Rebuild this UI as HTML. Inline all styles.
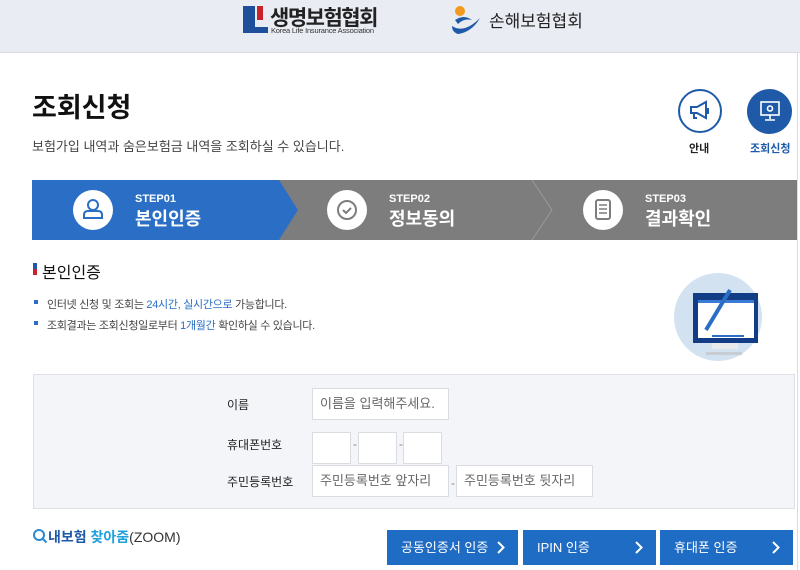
<!DOCTYPE html>
<html><head><meta charset="utf-8"><style>
*{margin:0;padding:0;box-sizing:border-box}
body{width:800px;height:570px;overflow:hidden;background:#fff;font-family:"Liberation Sans","Noto Sans CJK KR",sans-serif;color:#222;position:relative}
.abs{position:absolute}
.hdr{left:0;top:0;width:800px;height:53px;background:#e9edf3;border-bottom:1px solid #d8dde4}
.page{left:0;top:53px;width:798px;height:517px;border-right:1px solid #d8dde4}
.in{background:#fff;border:1px solid #d9dde2;font-size:13px;color:#666;padding-left:7px;line-height:30px;height:32px}
.btn{top:530px;height:35px;background:#1f6cc4;color:#fff;font-size:13px;line-height:35px;padding-left:14px}
.btn svg{position:absolute;right:13px;top:11px}
</style></head><body>
<div class="abs hdr"></div>
<div class="abs" style="left:243px;top:6px;width:12px;height:27px;background:#1e4f9a"></div>
<div class="abs" style="left:243px;top:27px;width:25px;height:6px;background:#1e4f9a"></div>
<div class="abs" style="left:257px;top:6px;width:6px;height:14px;background:#c8232c"></div>
<div class="abs" style="left:270px;top:2px;font-size:21px;font-weight:bold;color:#222;letter-spacing:-1.5px">생명보험협회</div>
<div class="abs" style="left:271px;top:26px;font-size:7.5px;color:#333;letter-spacing:-0.2px">Korea Life Insurance Association</div>
<svg class="abs" style="left:450px;top:4px" width="36" height="32"><circle cx="10" cy="7" r="5" fill="#f39a1e"/><path d="M2 22 Q14 30 30 14 Q22 28 8 30 Q2 28 2 22Z" fill="#1f5aa8"/><path d="M5 16 Q14 10 22 16 Q14 14 8 20Z" fill="#1f5aa8"/></svg>
<div class="abs" style="left:489px;top:7px;font-size:17px;color:#222">손해보험협회</div>
<div class="abs page"></div>
<div class="abs" style="left:32px;top:86px;font-size:27px;font-weight:bold;color:#111">조회신청</div>
<div class="abs" style="left:32px;top:136px;font-size:13px;color:#444">보험가입 내역과 숨은보험금 내역을 조회하실 수 있습니다.</div>
<div class="abs" style="left:678px;top:89px;width:44px;height:44px;border:2px solid #1f5aa8;border-radius:50%"></div>
<svg class="abs" style="left:688px;top:99px" width="24" height="24" fill="none" stroke="#1f5aa8" stroke-width="2"><path d="M3 8h6l9-5v16l-9-5H3z M6 14v5h3"/><path d="M20 9v6"/></svg>
<div class="abs" style="left:689px;top:140px;font-size:11px;font-weight:bold">안내</div>
<div class="abs" style="left:747px;top:89px;width:45px;height:45px;background:#1f5aa8;border-radius:50%"></div>
<svg class="abs" style="left:758px;top:100px" width="24" height="22" fill="none" stroke="#fff" stroke-width="1.6"><rect x="3" y="2" width="18" height="13"/><circle cx="12" cy="8.5" r="2.5"/><path d="M12 15v4M7 20h10"/></svg>
<div class="abs" style="left:750px;top:140px;font-size:11px;font-weight:bold;color:#1f5aa8">조회신청</div>
<svg class="abs" style="left:32px;top:180px" width="765" height="60">
<rect width="765" height="60" fill="#7d7d7d"/>
<polygon points="0,0 247,0 266,30 247,60 0,60" fill="#2a6fc5"/>
<polyline points="500,0 520,30 500,60" fill="none" stroke="#9a9a9a" stroke-width="1"/>
<circle cx="61" cy="30" r="20" fill="#fff"/><circle cx="61" cy="25" r="5" fill="none" stroke="#2a6fc5" stroke-width="2"/><path d="M52 38v-3q0-4 4-4h10q4 0 4 4v3z" fill="none" stroke="#2a6fc5" stroke-width="2"/>
<circle cx="315" cy="30" r="20" fill="#fff"/><circle cx="315" cy="30" r="9" fill="none" stroke="#7d7d7d" stroke-width="2"/><path d="M311 30l3 3 5-5" fill="none" stroke="#7d7d7d" stroke-width="2"/>
<circle cx="571" cy="30" r="20" fill="#fff"/><rect x="564" y="20" width="14" height="19" rx="2" fill="none" stroke="#7d7d7d" stroke-width="2"/><path d="M567 25h8M567 29h8M567 33h8" stroke="#7d7d7d" stroke-width="1.6"/>
<text x="103" y="22" fill="#fff" font-size="11" font-weight="bold" font-family="Liberation Sans">STEP01</text>
<text x="103" y="45" fill="#fff" font-size="18" font-weight="bold" font-family="Liberation Sans,Noto Sans CJK KR">본인인증</text>
<text x="357" y="22" fill="#fff" font-size="11" font-weight="bold" font-family="Liberation Sans">STEP02</text>
<text x="357" y="45" fill="#fff" font-size="18" font-weight="bold" font-family="Liberation Sans,Noto Sans CJK KR">정보동의</text>
<text x="613" y="22" fill="#fff" font-size="11" font-weight="bold" font-family="Liberation Sans">STEP03</text>
<text x="613" y="45" fill="#fff" font-size="18" font-weight="bold" font-family="Liberation Sans,Noto Sans CJK KR">결과확인</text>
</svg>
<div class="abs" style="left:33px;top:263px;width:4px;height:10px;background:#1f5aa8"></div>
<div class="abs" style="left:33px;top:269px;width:4px;height:6px;background:#c8232c"></div>
<div class="abs" style="left:42px;top:259px;font-size:16px;color:#111">본인인증</div>
<div class="abs" style="left:34px;top:300px;width:4px;height:4px;background:#2a6fc5"></div>
<div class="abs" style="left:47px;top:296px;font-size:11px;color:#444;letter-spacing:-0.3px">인터넷 신청 및 조회는 <span style="color:#2a6fc5">24시간, 실시간으로</span> 가능합니다.</div>
<div class="abs" style="left:34px;top:321px;width:4px;height:4px;background:#2a6fc5"></div>
<div class="abs" style="left:47px;top:317px;font-size:11px;color:#444;letter-spacing:-0.3px">조회결과는 조회신청일로부터 <span style="color:#2a6fc5">1개월간</span> 확인하실 수 있습니다.</div>
<svg class="abs" style="left:672px;top:272px" width="92" height="90">
<circle cx="46" cy="45" r="44" fill="#d3e2f1"/>
<rect x="21" y="21" width="65" height="50" fill="#123d86"/><rect x="26" y="28" width="56" height="38" fill="#fff"/>
<rect x="26" y="28" width="56" height="3" fill="#3a7bd5"/>
<path d="M34 58 L58 18" stroke="#2a6fc5" stroke-width="4"/><path d="M40 64h32" stroke="#2a6fc5" stroke-width="2"/>
<rect x="40" y="71" width="26" height="6" fill="#e8eaec"/><rect x="34" y="80" width="36" height="3" fill="#c8cdd3"/>
</svg>
<div class="abs" style="left:33px;top:374px;width:762px;height:135px;background:#f3f5f8;border:1px solid #dde1e6"></div>
<div class="abs" style="left:227px;top:396px;font-size:12px">이름</div>
<div class="abs in" style="left:312px;top:388px;width:137px">이름을 입력해주세요.</div>
<div class="abs" style="left:227px;top:436px;font-size:12px">휴대폰번호</div>
<div class="abs in" style="left:312px;top:432px;width:39px"></div>
<div class="abs" style="left:353px;top:437px;font-size:12px;color:#888">-</div>
<div class="abs in" style="left:358px;top:432px;width:39px"></div>
<div class="abs" style="left:399px;top:437px;font-size:12px;color:#888">-</div>
<div class="abs in" style="left:403px;top:432px;width:39px"></div>
<div class="abs" style="left:227px;top:473px;font-size:12px">주민등록번호</div>
<div class="abs in" style="left:312px;top:465px;width:137px">주민등록번호 앞자리</div>
<div class="abs" style="left:451px;top:476px;font-size:12px;color:#888">-</div>
<div class="abs in" style="left:456px;top:465px;width:137px">주민등록번호 뒷자리</div>
<svg class="abs" style="left:32px;top:528px" width="16" height="16" fill="none" stroke="#2a8bd5" stroke-width="2"><circle cx="7" cy="7" r="5"/><path d="M10.5 10.5l4 4"/></svg>
<div class="abs" style="left:48px;top:527px;font-size:14px;font-weight:bold;color:#1f5aa8">내보험 <span style="color:#1fa1dd">찾아줌</span><span style="font-weight:normal;color:#333">(ZOOM)</span></div>
<div class="abs btn" style="left:387px;width:131px">공동인증서 인증<svg width="8" height="13"><path d="M1 1l5.5 5.5L1 12" fill="none" stroke="#fff" stroke-width="2"/></svg></div>
<div class="abs btn" style="left:523px;width:133px">IPIN 인증<svg width="8" height="13"><path d="M1 1l5.5 5.5L1 12" fill="none" stroke="#fff" stroke-width="2"/></svg></div>
<div class="abs btn" style="left:660px;width:133px">휴대폰 인증<svg width="8" height="13"><path d="M1 1l5.5 5.5L1 12" fill="none" stroke="#fff" stroke-width="2"/></svg></div>
</body></html>
